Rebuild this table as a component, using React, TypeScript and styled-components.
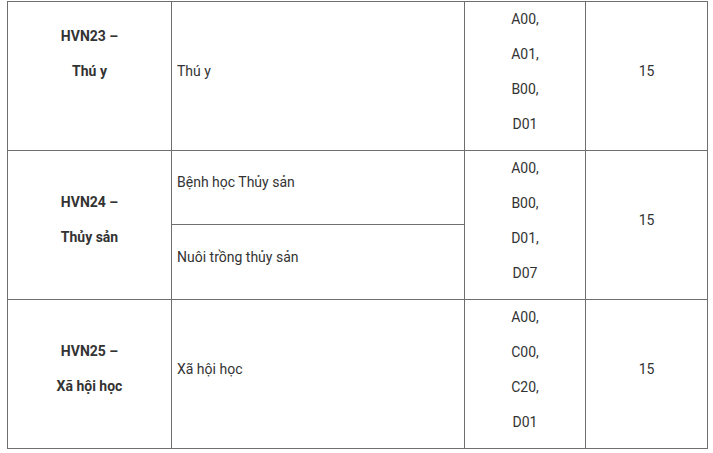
import * as React from 'react';
import styled, { createGlobalStyle } from 'styled-components';

const lineColor = '#6f6f6f';
const textColor = '#333333';

const GlobalStyle = createGlobalStyle`
  html, body {
    background: #ffffff;
    margin: 0;
  }

  body {
    padding: 1px 0 0 7px;
  }
`;

const Table = styled.table`
  border-collapse: collapse;
  color: ${textColor};
  font-family: Roboto, 'Liberation Sans', Arial, sans-serif;
  font-size: 14px;
  table-layout: fixed;
  width: 700px;
`;

const Row = styled.tr<{ $height: number }>`
  height: ${(p) => p.$height}px;
`;

const Cell = styled.td<{ $align?: 'left' | 'center'; $bold?: boolean; $lift?: number }>`
  border: 1px solid ${lineColor};
  font-weight: ${(p) => (p.$bold ? 700 : 400)};
  line-height: 35px;
  padding: 0 5px ${(p) => p.$lift ?? 10}px;
  text-align: ${(p) => p.$align ?? 'center'};
  vertical-align: middle;
`;

const CodeCell = styled.td`
  border: 1px solid ${lineColor};
  line-height: 35px;
  padding: 0;
  text-align: center;
  vertical-align: top;
`;

const Line = styled.div`
  white-space: nowrap;
`;

type Group = {
  code: string;
  name: string;
  majors: string[];
  subjects: string[];
  score: string;
  lift?: number;
};

const groups: Group[] = [
  { code: 'HVN23 –', name: 'Thú y', majors: ['Thú y'], subjects: ['A00,', 'A01,', 'B00,', 'D01'], score: '15', lift: 45 },
  { code: 'HVN24 –', name: 'Thủy sản', majors: ['Bệnh học Thủy sản', 'Nuôi trồng thủy sản'], subjects: ['A00,', 'B00,', 'D01,', 'D07'], score: '15' },
  { code: 'HVN25 –', name: 'Xã hội học', majors: ['Xã hội học'], subjects: ['A00,', 'C00,', 'C20,', 'D01'], score: '15' },
];

const GroupRows = ({ group }: { group: Group }) => {
  const span = group.majors.length;
  const subHeight = Math.floor(149 / span);
  return (
    <>
      {group.majors.map((major, i) => (
        <Row key={major} $height={i === span - 1 ? 149 - subHeight * i : subHeight}>
          {i === 0 && (
            <Cell rowSpan={span} $bold $lift={group.lift}>
              <Line>{group.code}</Line>
              <Line>{group.name}</Line>
            </Cell>
          )}
          <Cell $align="left">{major}</Cell>
          {i === 0 && (
            <>
              <CodeCell rowSpan={span}>
                {group.subjects.map((s) => (
                  <Line key={s}>{s}</Line>
                ))}
              </CodeCell>
              <Cell rowSpan={span}>{group.score}</Cell>
            </>
          )}
        </Row>
      ))}
    </>
  );
};

const App = () => {
  return (
    <>
      <GlobalStyle />
      <Table>
        <colgroup>
          <col style={{ width: 164 }} />
          <col style={{ width: 293 }} />
          <col style={{ width: 121 }} />
          <col style={{ width: 122 }} />
        </colgroup>
        <tbody>
          {groups.map((g) => (
            <GroupRows key={g.code} group={g} />
          ))}
        </tbody>
      </Table>
    </>
  );
};

export default App;
